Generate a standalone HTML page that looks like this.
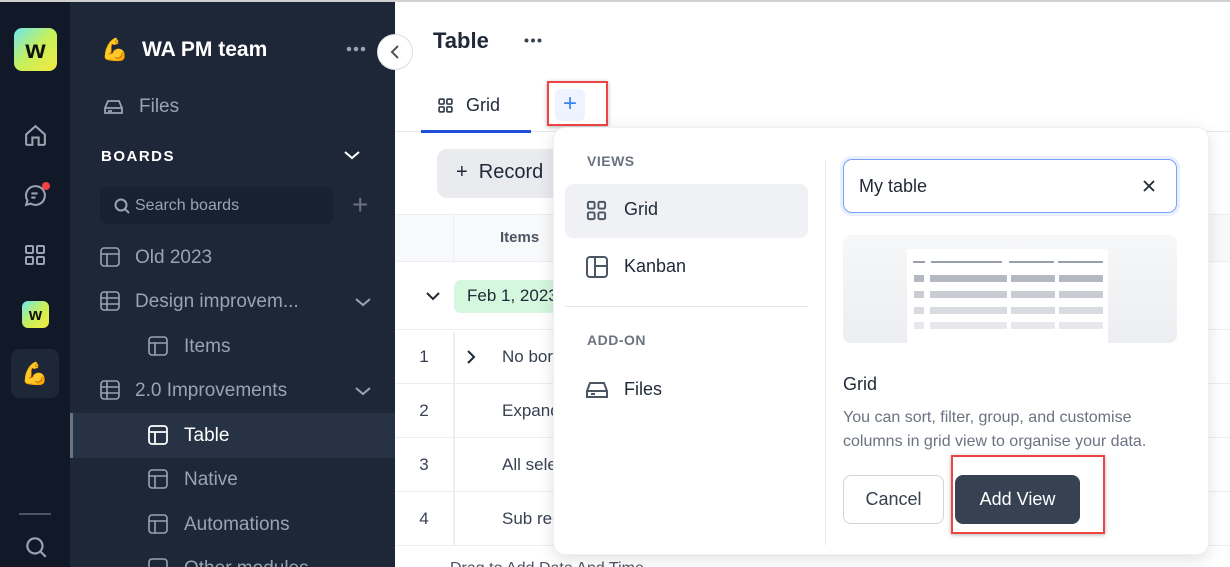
<!DOCTYPE html>
<html style="overflow:hidden;width:1230px;height:567px"><head><meta charset="utf-8"><style>
*{box-sizing:border-box;margin:0;padding:0}
body{width:1230px;height:567px;overflow:hidden;font-family:"Liberation Sans",sans-serif;background:#fff;position:relative}
.a{position:absolute}
.rail{left:0;top:0;width:70px;height:567px;background:#111827}
.side{left:70px;top:0;width:325px;height:567px;background:#1e2738}
.st{color:#9aa3b2;font-size:19px}
svg{display:block}
.row{left:395px;width:835px;border-bottom:1px solid #eceef1;height:54px}
.num{left:395px;width:58px;text-align:center;font-size:17px;color:#374151}
.cell{left:502px;font-size:17px;color:#374151}
</style></head><body>
<div class="a" style="left:0;top:0;width:1230px;height:2px;background:#d0d0d0;z-index:5"></div>
<div class="a rail"></div>
<div class="a side"></div>
<div class="a" style="left:14px;top:28px;width:43px;height:43px;border-radius:8px;background:linear-gradient(135deg,#6ee7f0,#c6f05a 50%,#f5e940);color:#111;font-weight:bold;font-size:26px;text-align:center;line-height:43px">w</div>
<svg class="a" style="left:23px;top:123px" width="25" height="25" viewBox="0 0 24 24" fill="none" stroke="#9aa3b2" stroke-width="2"><path d="M3 11l9-8 9 8v9a1 1 0 0 1-1 1h-5v-7h-6v7H4a1 1 0 0 1-1-1z"/></svg>
<svg class="a" style="left:23px;top:183px" width="25" height="25" viewBox="0 0 24 24" fill="none" stroke="#9aa3b2" stroke-width="2"><path d="M12 3a9 9 0 1 1-4.5 16.8L3 21l1.3-4.2A9 9 0 0 1 12 3z"/><path d="M8 10h6M8 14h4"/></svg>
<div class="a" style="left:42px;top:182px;width:8px;height:8px;border-radius:50%;background:#ef4444"></div>
<svg class="a" style="left:23px;top:243px" width="24" height="24" viewBox="0 0 24 24" fill="none" stroke="#9aa3b2" stroke-width="2"><rect x="3" y="3" width="7" height="7" rx="1"/><rect x="14" y="3" width="7" height="7" rx="1"/><rect x="3" y="14" width="7" height="7" rx="1"/><rect x="14" y="14" width="7" height="7" rx="1"/></svg>
<div class="a" style="left:22px;top:301px;width:27px;height:27px;border-radius:6px;background:linear-gradient(135deg,#6ee7f0,#c6f05a 50%,#f5e940);color:#111;font-weight:bold;font-size:17px;text-align:center;line-height:27px">w</div>
<div class="a" style="left:11px;top:349px;width:48px;height:49px;border-radius:8px;background:#1e2738;text-align:center;line-height:49px;font-size:22px">💪</div>
<div class="a" style="left:19px;top:513px;width:32px;height:2px;background:#4b5563"></div>
<svg class="a" style="left:23px;top:534px" width="26" height="26" viewBox="0 0 24 24" fill="none" stroke="#9aa3b2" stroke-width="2"><circle cx="11" cy="11" r="7"/><path d="M16 16l5 5"/></svg>
<div class="a" style="left:101px;top:37px;font-size:22px">💪</div>
<div class="a" style="left:142px;top:38px;font-size:21px;font-weight:bold;color:#fff">WA PM team</div>
<svg class="a" style="left:346px;top:46px" width="20" height="6" viewBox="0 0 20 6" fill="#9aa3b2"><circle cx="3" cy="3" r="2.3"/><circle cx="10" cy="3" r="2.3"/><circle cx="17" cy="3" r="2.3"/></svg>
<div class="a" style="left:377px;top:34px;width:36px;height:36px;border-radius:50%;background:#fff;border:1px solid #ddd;z-index:3"><svg width="34" height="34" viewBox="0 0 34 34" fill="none" stroke="#555" stroke-width="2"><path d="M20 11l-6 6 6 6"/></svg></div>
<svg class="a" style="left:103px;top:97px" width="21" height="20" viewBox="0 0 21 20" fill="none" stroke="#9aa3b2" stroke-width="1.8"><path d="M2 11l3-7h11l3 7v5H2z M2 11h17"/><path d="M5 14h4"/></svg>
<div class="a st" style="left:139px;top:96px">Files</div>
<div class="a" style="left:101px;top:148px;color:#fff;font-weight:bold;font-size:15px;letter-spacing:1.5px">BOARDS</div>
<svg class="a" style="left:343px;top:148px" width="18" height="14" viewBox="0 0 18 14" fill="none" stroke="#fff" stroke-width="2"><path d="M2 4l7 6 7-6"/></svg>
<div class="a" style="left:100px;top:187px;width:233px;height:37px;border-radius:7px;background:#182131"></div>
<svg class="a" style="left:113px;top:197px" width="18" height="18" viewBox="0 0 18 18" fill="none" stroke="#9aa3b2" stroke-width="2"><circle cx="8" cy="8" r="5.5"/><path d="M12 12l4 4"/></svg>
<div class="a" style="left:135px;top:197px;color:#9aa3b2;font-size:16px">Search boards</div>
<div class="a" style="left:352px;top:189px;color:#6b7280;font-size:28px;font-weight:300">+</div>
<div class="a" style="left:70px;top:413px;width:325px;height:45px;background:#283245"></div>
<div class="a" style="left:70px;top:413px;width:3px;height:45px;background:#6b7280"></div>
<svg class="a" style="left:100px;top:247px" width="20" height="20" viewBox="0 0 20 20" fill="none" stroke="#9aa3b2" stroke-width="1.6"><rect x="1" y="1" width="18" height="18" rx="3"/><path d="M1 7h18M7 7v12"/></svg>
<div class="a st" style="left:135px;top:247px">Old 2023</div>
<svg class="a" style="left:100px;top:291px" width="20" height="20" viewBox="0 0 20 20" fill="none" stroke="#9aa3b2" stroke-width="1.6"><rect x="1" y="1" width="18" height="18" rx="3"/><path d="M1 7h18M1 13h18M7 1v18"/></svg>
<div class="a st" style="left:135px;top:291px">Design improvem...</div>
<svg class="a" style="left:354px;top:295px" width="18" height="14" viewBox="0 0 18 14" fill="none" stroke="#9aa3b2" stroke-width="2"><path d="M2 4l7 6 7-6"/></svg>
<svg class="a" style="left:148px;top:336px" width="20" height="20" viewBox="0 0 20 20" fill="none" stroke="#9aa3b2" stroke-width="1.6"><rect x="1" y="1" width="18" height="18" rx="3"/><path d="M1 7h18M7 7v12"/></svg>
<div class="a st" style="left:184px;top:336px">Items</div>
<svg class="a" style="left:100px;top:380px" width="20" height="20" viewBox="0 0 20 20" fill="none" stroke="#9aa3b2" stroke-width="1.6"><rect x="1" y="1" width="18" height="18" rx="3"/><path d="M1 7h18M1 13h18M7 1v18"/></svg>
<div class="a st" style="left:135px;top:380px">2.0 Improvements</div>
<svg class="a" style="left:354px;top:384px" width="18" height="14" viewBox="0 0 18 14" fill="none" stroke="#9aa3b2" stroke-width="2"><path d="M2 4l7 6 7-6"/></svg>
<svg class="a" style="left:148px;top:425px" width="20" height="20" viewBox="0 0 20 20" fill="none" stroke="#fff" stroke-width="1.8"><rect x="1" y="1" width="18" height="18" rx="3"/><path d="M1 7h18M7 7v12"/></svg>
<div class="a" style="left:184px;top:425px;color:#fff;font-size:19px">Table</div>
<svg class="a" style="left:148px;top:469px" width="20" height="20" viewBox="0 0 20 20" fill="none" stroke="#9aa3b2" stroke-width="1.6"><rect x="1" y="1" width="18" height="18" rx="3"/><path d="M1 7h18M7 7v12"/></svg>
<div class="a st" style="left:184px;top:469px">Native</div>
<svg class="a" style="left:148px;top:514px" width="20" height="20" viewBox="0 0 20 20" fill="none" stroke="#9aa3b2" stroke-width="1.6"><rect x="1" y="1" width="18" height="18" rx="3"/><path d="M1 7h18M7 7v12"/></svg>
<div class="a st" style="left:184px;top:514px">Automations</div>
<svg class="a" style="left:148px;top:558px" width="20" height="20" viewBox="0 0 20 20" fill="none" stroke="#9aa3b2" stroke-width="1.6"><rect x="1" y="1" width="18" height="18" rx="3"/></svg>
<div class="a st" style="left:184px;top:558px">Other modules</div>
<div class="a" style="left:433px;top:28px;font-size:22px;font-weight:bold;color:#1f2937">Table</div>
<svg class="a" style="left:524px;top:38px" width="18" height="5" viewBox="0 0 18 5" fill="#374151"><circle cx="2.5" cy="2.5" r="2"/><circle cx="9" cy="2.5" r="2"/><circle cx="15.5" cy="2.5" r="2"/></svg>
<svg class="a" style="left:437px;top:97px" width="17" height="17" viewBox="0 0 24 24" fill="none" stroke="#374151" stroke-width="2.4"><rect x="3" y="3" width="7" height="7" rx="1.5"/><rect x="14" y="3" width="7" height="7" rx="1.5"/><rect x="3" y="14" width="7" height="7" rx="1.5"/><rect x="14" y="14" width="7" height="7" rx="1.5"/></svg>
<div class="a" style="left:466px;top:95px;font-size:18px;color:#1f2937">Grid</div>
<div class="a" style="left:395px;top:131px;width:835px;height:1px;background:#e5e7eb"></div>
<div class="a" style="left:421px;top:130px;width:110px;height:3px;background:#1d4ed8"></div>
<div class="a" style="left:555px;top:89px;width:30px;height:32px;border-radius:6px;background:#eef3ff;color:#3b82f6;font-size:24px;text-align:center;line-height:30px">+</div>
<div class="a" style="left:547px;top:81px;width:61px;height:45px;border:2px solid #ef4444;box-shadow:0 1px 4px rgba(0,0,0,.3)"></div>
<div class="a" style="left:437px;top:149px;width:130px;height:49px;border-radius:10px;background:#e9ebef"></div>
<div class="a" style="left:456px;top:161px;font-size:20px;color:#1f2937">+ &nbsp;Record</div>
<div class="a" style="left:395px;top:214px;width:835px;height:48px;background:#f8f9fb;border-top:1px solid #eceef1;border-bottom:1px solid #eceef1"></div>
<div class="a" style="left:453px;top:214px;width:1px;height:48px;background:#eceef1"></div>
<div class="a" style="left:500px;top:229px;font-size:15px;font-weight:bold;color:#4b5563">Items</div>
<div class="a" style="left:395px;top:262px;width:835px;height:68px;border-bottom:1px solid #eceef1"></div>
<svg class="a" style="left:425px;top:290px" width="16" height="12" viewBox="0 0 16 12" fill="none" stroke="#1f2937" stroke-width="2"><path d="M2 3l6 6 6-6"/></svg>
<div class="a" style="left:454px;top:280px;width:120px;height:33px;border-radius:7px;background:#d4f7dd"></div>
<div class="a" style="left:467px;top:286px;font-size:17px;color:#1f2937">Feb 1, 2023</div>
<div class="a row" style="top:330px"></div><div class="a row" style="top:384px"></div><div class="a row" style="top:438px"></div><div class="a row" style="top:492px"></div>
<div class="a" style="left:453px;top:332px;width:2px;height:214px;background:#eceef1"></div>
<div class="a num" style="top:347px">1</div><div class="a num" style="top:401px">2</div><div class="a num" style="top:455px">3</div><div class="a num" style="top:509px">4</div>
<svg class="a" style="left:465px;top:349px" width="12" height="16" viewBox="0 0 12 16" fill="none" stroke="#1f2937" stroke-width="2"><path d="M3 2l6 6-6 6"/></svg>
<div class="a cell" style="top:347px">No border</div><div class="a cell" style="top:401px">Expand</div><div class="a cell" style="top:455px">All select</div><div class="a cell" style="top:509px">Sub rec</div>
<div class="a" style="left:450px;top:560px;font-size:16px;color:#4b5563">Drag to Add Date And Time</div>
<div class="a" style="left:553px;top:127px;width:656px;height:428px;background:#fff;border-radius:12px;box-shadow:0 4px 16px rgba(0,0,0,.12);border:1px solid #eef0f3"></div>
<div class="a" style="left:587px;top:153px;font-size:14px;font-weight:bold;color:#6b7280;letter-spacing:.5px">VIEWS</div>
<div class="a" style="left:565px;top:184px;width:243px;height:54px;border-radius:8px;background:#eff1f4"></div>
<svg class="a" style="left:585px;top:199px" width="23" height="23" viewBox="0 0 24 24" fill="none" stroke="#4b5563" stroke-width="2"><rect x="3" y="3" width="7" height="7" rx="1.5"/><rect x="14" y="3" width="7" height="7" rx="1.5"/><rect x="3" y="14" width="7" height="7" rx="1.5"/><rect x="14" y="14" width="7" height="7" rx="1.5"/></svg>
<div class="a" style="left:624px;top:199px;font-size:18px;color:#1f2937">Grid</div>
<svg class="a" style="left:586px;top:256px" width="22" height="22" viewBox="0 0 22 22" fill="none" stroke="#4b5563" stroke-width="2"><rect x="1" y="1" width="20" height="20" rx="3"/><path d="M9 1v20M9 10h12"/></svg>
<div class="a" style="left:624px;top:256px;font-size:18px;color:#1f2937">Kanban</div>
<div class="a" style="left:565px;top:306px;width:243px;height:1px;background:#e5e7eb"></div>
<div class="a" style="left:587px;top:332px;font-size:14px;font-weight:bold;color:#6b7280;letter-spacing:.5px">ADD-ON</div>
<svg class="a" style="left:586px;top:380px" width="22" height="20" viewBox="0 0 22 20" fill="none" stroke="#4b5563" stroke-width="2"><path d="M1 11l3-8h14l3 8v6H1z M1 11h20"/><path d="M5 14h4"/></svg>
<div class="a" style="left:624px;top:379px;font-size:18px;color:#1f2937">Files</div>
<div class="a" style="left:825px;top:160px;width:1px;height:385px;background:#e5e7eb"></div>
<div class="a" style="left:843px;top:159px;width:334px;height:54px;border-radius:9px;border:1px solid #7aa2f7;box-shadow:0 0 0 3px #e8efff"></div>
<div class="a" style="left:859px;top:176px;font-size:18px;color:#1f2937">My table</div>
<svg class="a" style="left:1142px;top:179px" width="14" height="14" viewBox="0 0 14 14" stroke="#1f2937" stroke-width="1.8"><path d="M2 2l10 10M12 2L2 12"/></svg>
<div class="a" style="left:843px;top:235px;width:334px;height:108px;border-radius:8px;background:linear-gradient(#f6f7f8,#eceef1)"></div>
<div class="a" style="left:907px;top:249px;width:201px;height:94px;background:#fff"></div>
<svg class="a" style="left:913px;top:259px" width="190" height="72" viewBox="0 0 190 72">
<g fill="#9aa0aa"><rect x="0" y="2" width="12" height="2"/><rect x="18" y="2" width="71" height="2"/><rect x="96" y="2" width="45" height="2"/><rect x="145" y="2" width="45" height="2"/></g>
<g fill="#b4b9c1"><rect x="1" y="16" width="10" height="7"/><rect x="17" y="16" width="77" height="7"/><rect x="98" y="16" width="44" height="7"/><rect x="146" y="16" width="45" height="7"/></g>
<g fill="#c9cdd3"><rect x="1" y="32" width="10" height="7"/><rect x="17" y="32" width="77" height="7"/><rect x="98" y="32" width="44" height="7"/><rect x="146" y="32" width="45" height="7"/></g>
<g fill="#d8dbe0"><rect x="1" y="48" width="10" height="7"/><rect x="17" y="48" width="77" height="7"/><rect x="98" y="48" width="44" height="7"/><rect x="146" y="48" width="45" height="7"/></g>
<g fill="#e6e8eb"><rect x="1" y="63" width="10" height="7"/><rect x="17" y="63" width="77" height="7"/><rect x="98" y="63" width="44" height="7"/><rect x="146" y="63" width="45" height="7"/></g></svg>
<div class="a" style="left:843px;top:374px;font-size:18px;color:#1f2937">Grid</div>
<div class="a" style="left:843px;top:406px;font-size:16px;line-height:24px;color:#6b7280;width:330px">You can sort, filter, group, and customise<br>columns in grid view to organise your data.</div>
<div class="a" style="left:843px;top:475px;width:101px;height:49px;border-radius:8px;border:1px solid #d1d5db;font-size:18px;color:#374151;text-align:center;line-height:47px">Cancel</div>
<div class="a" style="left:955px;top:475px;width:125px;height:49px;border-radius:8px;background:#364152;font-size:18px;color:#fff;text-align:center;line-height:49px">Add View</div>
<div class="a" style="left:951px;top:455px;width:154px;height:79px;border:2px solid #ef4444;box-shadow:0 1px 4px rgba(0,0,0,.3)"></div>
</body></html>
